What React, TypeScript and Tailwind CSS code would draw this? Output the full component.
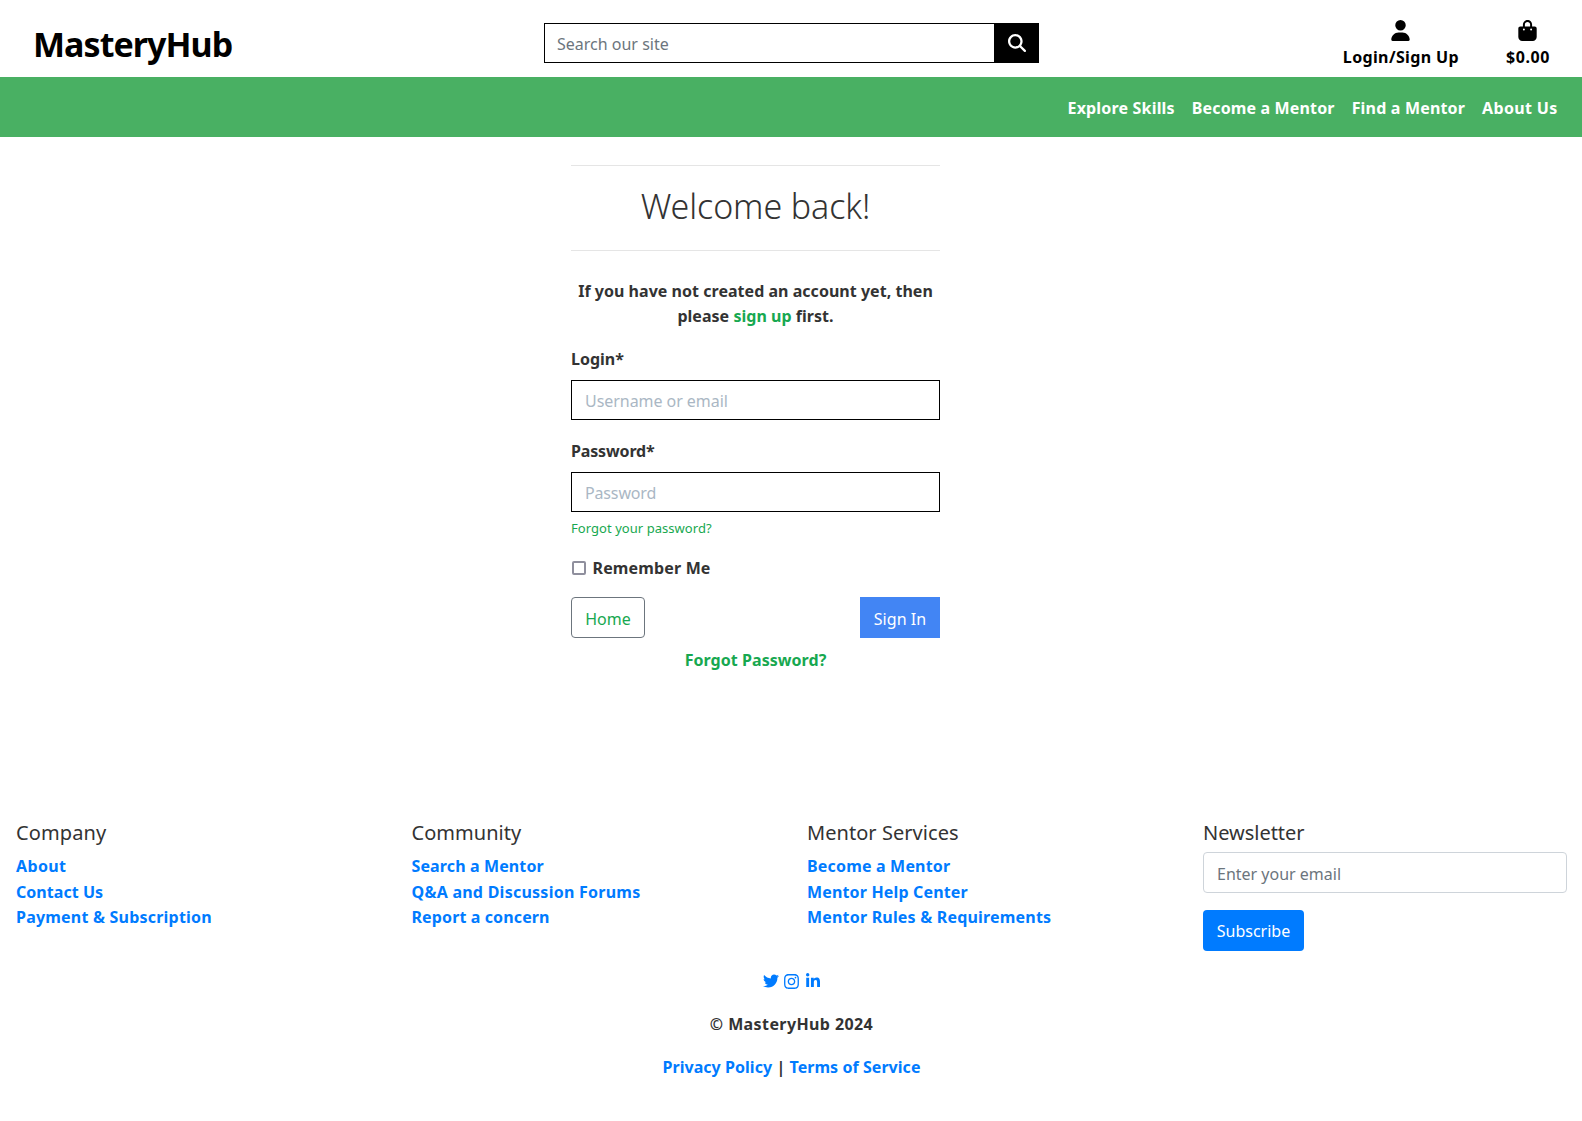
import React from "react";
import { FaBagShopping, FaInstagram, FaLinkedinIn, FaMagnifyingGlass, FaTwitter, FaUser } from "react-icons/fa6";

const navLinks = [
  { label: "Explore Skills", cls: "tracking-[0.18px]" },
  { label: "Become a Mentor", cls: "tracking-[0.15px]" },
  { label: "Find a Mentor", cls: "tracking-[0.18px]" },
  { label: "About Us", cls: "tracking-[0.32px]" },
];

const columns = [
  {
    title: "Company",
    cls: "tracking-[0.11px]",
    links: [
      { label: "About", cls: "tracking-[0.35px]" },
      { label: "Contact Us", cls: "tracking-[0.04px]" },
      { label: "Payment & Subscription", cls: "tracking-[0.21px]" },
    ],
  },
  {
    title: "Community",
    cls: "tracking-[0.03px]",
    links: [
      { label: "Search a Mentor", cls: "tracking-[0.12px]" },
      { label: "Q&A and Discussion Forums", cls: "tracking-[0.25px]" },
      { label: "Report a concern", cls: "tracking-[0.12px]" },
    ],
  },
  {
    title: "Mentor Services",
    cls: "tracking-[0.05px]",
    links: [
      { label: "Become a Mentor", cls: "tracking-[0.18px]" },
      { label: "Mentor Help Center", cls: "tracking-[0.16px]" },
      { label: "Mentor Rules & Requirements", cls: "tracking-[0.19px]" },
    ],
  },
];

function Header() {
  return (
    <header className="flex h-[77px] items-start justify-between pr-[32px] pl-[33px] text-black">
      <a href="#" className="mt-[21px] w-[511px] text-[34px] leading-[46px] font-bold tracking-[-0.95px]">
        MasteryHub
      </a>
      <form className="mt-[23px] flex h-10 w-[495px]">
        <input
          placeholder="Search our site"
          className="h-10 min-w-0 flex-1 border border-black pt-0.5 pl-3 leading-6 outline-none placeholder:text-[#6c757d]"
        />
        <button type="button" className="flex w-[44px] items-center justify-center bg-black text-white">
          <FaMagnifyingGlass className="size-[18px]" />
        </button>
      </form>
      <div className="flex w-[511px] justify-end gap-[48px] pt-[20px]">
        <a href="#" className="flex flex-col items-center">
          <FaUser className="h-[21px] w-[19px]" />
          <span className="mt-[4px] -mr-px leading-6 font-bold tracking-[0.36px]">Login/Sign Up</span>
        </a>
        <a href="#" className="flex flex-col items-center">
          <FaBagShopping className="h-[21px] w-[19px]" />
          <span className="mt-[4px] leading-6 font-bold tracking-[0.6px]">$0.00</span>
        </a>
      </div>
    </header>
  );
}

function Field({ label, labelCls, placeholder, type, inputCls }: { label: string; labelCls: string; placeholder: string; type: string; inputCls: string }) {
  return (
    <label className="block">
      <span className={`block h-[34px] leading-[26px] font-bold ${labelCls}`}>{label}</span>
      <input
        type={type}
        placeholder={placeholder}
        className={`block h-10 w-full border border-black pt-0.5 pl-[13px] leading-6 outline-none placeholder:text-[#aab7c4] ${inputCls}`}
      />
    </label>
  );
}

function LoginForm() {
  return (
    <main className="ml-[571px] h-[684px] w-[369px] pt-[28px]">
      <hr className="border-black/10" />
      <h1 className="h-[84px] pt-[15px] text-center text-[34px] leading-[50px] font-light tracking-[-0.1px]">Welcome back!</h1>
      <hr className="border-black/10" />
      <p className="mt-[28px] text-center leading-[25px] font-bold tracking-[0.03px]">
        If you have not created an account yet, then please{" "}
        <a href="#" className="text-[#17a850]">sign up</a> first.
      </p>
      <form className="mt-[17px]">
        <Field label="Login*" labelCls="tracking-normal" placeholder="Username or email" type="text" inputCls="tracking-[-0.05px]" />
        <div className="h-[18px]" />
        <Field label="Password*" labelCls="tracking-[-0.15px]" placeholder="Password" type="password" inputCls="tracking-[-0.15px]" />
        <a href="#" className="mt-[6px] block text-[13px] leading-[21px] tracking-[0.05px] text-[#17a850]">
          Forgot your password?
        </a>
        <label className="mt-[16px] flex h-[26px] items-center font-bold tracking-[0.15px]">
          <input type="checkbox" className="-mt-px mr-[7px] ml-[0.5px] size-[14px] appearance-none rounded-[2px] border-2 border-[#8f8f9d] bg-white" />
          <span className="leading-[26px]">Remember Me</span>
        </label>
        <div className="mt-[16px] flex justify-between">
          <a href="#" className="h-[41px] w-[74px] rounded border border-[#6c757d] pt-[2px] text-center leading-[39px] text-[#17a850]">
            Home
          </a>
          <button type="button" className="h-[41px] w-[80px] bg-[#4285f4] pt-[3px] leading-[38px] tracking-[0.05px] text-white">
            Sign In
          </button>
        </div>
        <a href="#" className="mt-[9px] block text-center leading-[26px] font-bold tracking-[0.05px] text-[#17a850]">
          Forgot Password?
        </a>
      </form>
    </main>
  );
}

function Footer() {
  return (
    <footer>
      <div className="grid h-[151px] grid-cols-4">
        {columns.map((c) => (
          <section key={c.title} className="px-4">
            <h5 className={`h-[33px] text-[20px] leading-6 ${c.cls}`}>{c.title}</h5>
            <ul>
              {c.links.map((l) => (
                <li key={l.label} className={`h-[25.6px] leading-[25.6px] font-bold text-[#007bff] ${l.cls}`}>
                  <a href="#">{l.label}</a>
                </li>
              ))}
            </ul>
          </section>
        ))}
        <section className="pr-[15px] pl-[16.5px]">
          <h5 className="h-[31px] text-[20px] leading-6 tracking-[-0.03px]">Newsletter</h5>
          <input
            placeholder="Enter your email"
            className="block h-[41px] w-full rounded border border-[#ced4da] pt-0.5 pl-[13px] leading-6 tracking-[0px] outline-none placeholder:text-[#6c757d]"
          />
          <button type="button" className="mt-[17px] h-[41px] w-[101px] rounded bg-[#007bff] pt-0.5 leading-[39px] text-white">
            Subscribe
          </button>
        </section>
      </div>
      <div className="flex h-[39px] justify-center gap-[4.5px] pt-px pl-px text-[#007bff]">
        <FaTwitter className="size-4" />
        <FaInstagram className="size-[17px]" />
        <FaLinkedinIn className="size-4" />
      </div>
      <p className="h-[43px] pl-px text-center leading-[26px] font-bold tracking-[0.4px]">© MasteryHub 2024</p>
      <p className="pl-px text-center leading-[26px] font-bold tracking-[0.05px]">
        <a href="#" className="text-[#007bff]">Privacy Policy</a> | <a href="#" className="text-[#007bff]">Terms of Service</a>
      </p>
    </footer>
  );
}

export default function App() {
  return (
    <div className="h-[1121px] w-[1582px] overflow-hidden bg-white font-['Noto_Sans',sans-serif] text-base text-[#333333]">
      <Header />
      <nav className="flex h-[60px] items-center justify-end gap-[17px] bg-[#49b063] pt-[2px] pr-[24.5px] text-white">
        {navLinks.map((l) => (
          <a key={l.label} href="#" className={`leading-[26px] font-bold ${l.cls}`}>{l.label}</a>
        ))}
      </nav>
      <LoginForm />
      <Footer />
    </div>
  );
}
